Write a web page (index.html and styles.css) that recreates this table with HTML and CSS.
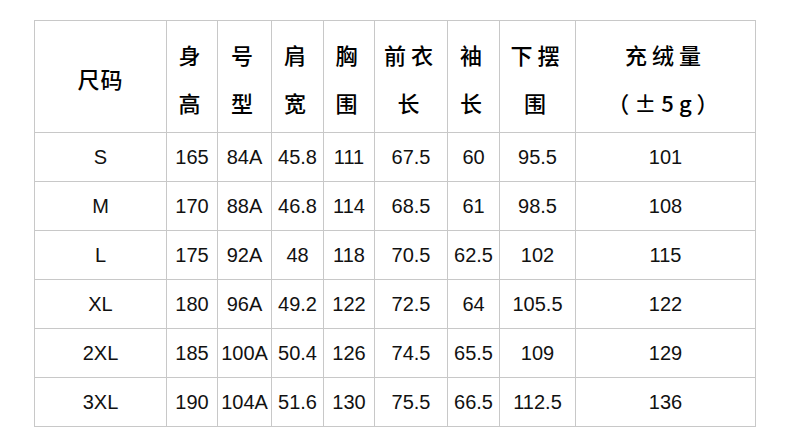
FILE: index.html
```html
<!DOCTYPE html>
<html lang="zh-CN">
<head>
<meta charset="utf-8">
<title>尺码表</title>
<link rel="stylesheet" href="styles.css">
</head>
<body>
<div class="page">
  <div class="size-table">
    <div class="cell head head-single">尺码</div>
    <div class="cell head">身<br>高</div>
    <div class="cell head">号<br>型</div>
    <div class="cell head">肩<br>宽</div>
    <div class="cell head">胸<br>围</div>
    <div class="cell head">前衣<br>长</div>
    <div class="cell head">袖<br>长</div>
    <div class="cell head">下摆<br>围</div>
    <div class="cell head">充绒量<br>（±5g）</div>

    <div class="cell">S</div><div class="cell">165</div><div class="cell">84A</div><div class="cell">45.8</div><div class="cell">111</div><div class="cell">67.5</div><div class="cell">60</div><div class="cell">95.5</div><div class="cell">101</div>
    <div class="cell">M</div><div class="cell">170</div><div class="cell">88A</div><div class="cell">46.8</div><div class="cell">114</div><div class="cell">68.5</div><div class="cell">61</div><div class="cell">98.5</div><div class="cell">108</div>
    <div class="cell">L</div><div class="cell">175</div><div class="cell">92A</div><div class="cell">48</div><div class="cell">118</div><div class="cell">70.5</div><div class="cell">62.5</div><div class="cell">102</div><div class="cell">115</div>
    <div class="cell">XL</div><div class="cell">180</div><div class="cell">96A</div><div class="cell">49.2</div><div class="cell">122</div><div class="cell">72.5</div><div class="cell">64</div><div class="cell">105.5</div><div class="cell">122</div>
    <div class="cell">2XL</div><div class="cell">185</div><div class="cell">100A</div><div class="cell">50.4</div><div class="cell">126</div><div class="cell">74.5</div><div class="cell">65.5</div><div class="cell">109</div><div class="cell">129</div>
    <div class="cell">3XL</div><div class="cell">190</div><div class="cell">104A</div><div class="cell">51.6</div><div class="cell">130</div><div class="cell">75.5</div><div class="cell">66.5</div><div class="cell">112.5</div><div class="cell">136</div>
  </div>
</div>
</body>
</html>
```

FILE: styles.css
```css
* {
  box-sizing: border-box;
}

html, body {
  margin: 0;
  padding: 0;
  background: #ffffff;
}

.page {
  padding: 20px 0 0 34px;
  width: 790px;
  height: 427px;
  overflow: hidden;
}

.size-table {
  display: grid;
  grid-template-columns: 132px 51px 54px 52px 51px 73px 52px 76px 180px;
  grid-template-rows: 112px repeat(6, 49px);
  width: 722px;
  border-left: 1px solid #c8c8c8;
  border-top: 1px solid #c8c8c8;
  font-family: "Liberation Sans", "Noto Sans CJK SC", sans-serif;
  color: #111111;
}

.cell {
  display: flex;
  align-items: center;
  justify-content: center;
  text-align: center;
  border-right: 1px solid #c8c8c8;
  border-bottom: 1px solid #c8c8c8;
  font-size: 20px;
  white-space: nowrap;
}

.head {
  font-family: "Noto Sans CJK SC", sans-serif;
  font-weight: 500;
  font-size: 22px;
  line-height: 48px;
  letter-spacing: 5px;
  color: #000000;
  padding-top: 3px;
}

.head-single {
  letter-spacing: 1px;
  padding-top: 2px;
}
```
